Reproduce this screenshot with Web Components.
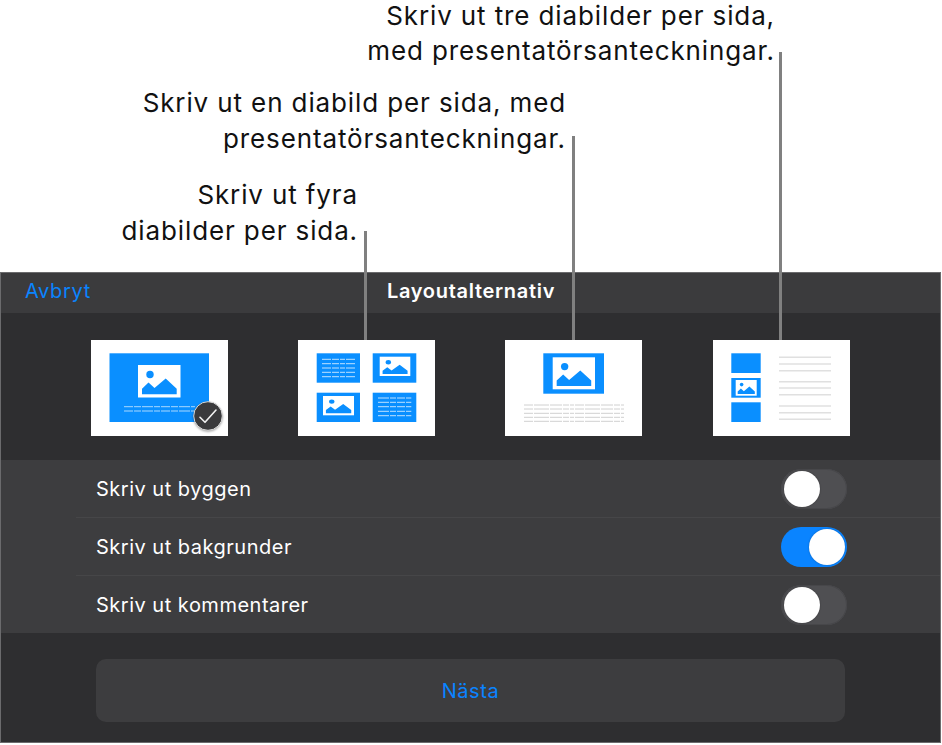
<!doctype html>
<html lang="sv">
<head>
<meta charset="utf-8">
<title>Layoutalternativ</title>
<style>
  html, body { margin: 0; background: #fff; }
  body { font-family: Inter, "Liberation Sans", sans-serif; }
</style>
</head>
<body>
<layout-figure>
  <callout-note slot="notes" right="167" top="1" line-x="780" line-top="52"><span style="margin-bottom: 5px">Skriv ut tre diabilder per sida,</span><span>med presentatörsanteckningar.</span></callout-note>
  <callout-note slot="notes" right="376" top="88" line-x="573" line-top="136"><span>Skriv ut en diabild per sida, med</span><span>presentatörsanteckningar.</span></callout-note>
  <callout-note slot="notes" right="584" top="180" line-x="365" line-top="231"><span>Skriv ut fyra</span><span>diabilder per sida.</span></callout-note>
  <layout-panel>
    <print-thumb kind="one" checked></print-thumb>
    <print-thumb kind="four"></print-thumb>
    <print-thumb kind="notes"></print-thumb>
    <print-thumb kind="three"></print-thumb>
    <option-row slot="options" label="Skriv ut byggen"></option-row>
    <option-row slot="options" label="Skriv ut bakgrunder" on></option-row>
    <option-row slot="options" label="Skriv ut kommentarer"></option-row>
  </layout-panel>
</layout-figure>

<script>
const BLUE = "#0a8fff";

// mountain picture, drawn in a 42.5 x 32 frame
function picture(x, y, w, h) {
  const sx = w / 42.5;
  const sy = h / 32;
  return `<g transform="translate(${x} ${y}) scale(${sx} ${sy})">
    <rect width="42.5" height="32" fill="#fff"/>
    <circle cx="12" cy="9.3" r="3.7" fill="${BLUE}"/>
    <path d="M4 28.7V23.3L10.5 17.3L16.5 22.7L27.7 13.3L38.7 23.3V28.7Z" fill="${BLUE}"/>
  </g>`;
}

function textLines(x, w, ys, color, h, dash) {
  return ys
    .map((y) => `<line x1="${x}" x2="${x + w}" y1="${y}" y2="${y}" stroke="${color}" stroke-width="${h}" ${dash ? `stroke-dasharray="${dash}"` : ""}/>`)
    .join("");
}

const THUMBS = {
  one: `<rect x="18.5" y="13.3" width="99.5" height="68.7" fill="${BLUE}"/>
    ${picture(47, 25, 42.5, 32.5)}
    ${textLines(33, 71, [66.7, 71], "#a9d8ff", 1, "9 1 7 1 11 1 6 1")}`,
  four: `<rect x="18.7" y="13.3" width="43.3" height="29.4" fill="${BLUE}"/>
    <rect x="74.7" y="13.3" width="43.6" height="29.4" fill="${BLUE}"/>
    <rect x="18.7" y="52.7" width="43.3" height="29.3" fill="${BLUE}"/>
    <rect x="74.7" y="52.7" width="43.6" height="29.3" fill="${BLUE}"/>
    ${textLines(24, 33.3, [19.3, 23.7, 28, 32.3, 36.7], "#bfe1ff", 1, "9 1 7 1 5 1")}
    ${picture(81.7, 16.7, 30.6, 19.3)}
    ${picture(25, 56, 31, 19.3)}
    ${textLines(80, 33.3, [58, 62.3, 66.7, 71.3, 75.7], "#bfe1ff", 1, "11 1 6 1 8 1")}`,
  notes: `<rect x="38.3" y="13.3" width="60.7" height="40.4" fill="${BLUE}"/>
    ${picture(47.7, 17.3, 42.3, 32)}
    ${textLines(19, 100, [65, 69, 73.3, 77.3, 81.3], "#d0d0d0", 1, "9 1 15 1 12 1 6 1 4 1")}`,
  three: `<rect x="18.3" y="13.3" width="29.4" height="19.7" fill="${BLUE}"/>
    <rect x="18.3" y="38" width="29.4" height="19.7" fill="${BLUE}"/>
    <rect x="18.3" y="62.3" width="29.4" height="19.7" fill="${BLUE}"/>
    ${picture(22.7, 40, 21, 15.7)}
    ${textLines(66, 52, [17.3, 24, 30.7, 41.7, 48, 54.7, 66, 72.7, 79.3], "#e0e0e0", 1.4)}`,
};

class CalloutNote extends HTMLElement {
  constructor() {
    super();
    this.attachShadow({ mode: "open" }).innerHTML = `
      <style>
        :host { display: contents; }
        .text {
          position: absolute;
          white-space: nowrap;
          text-align: right;
          color: #111;
          font: 400 26px/30px Inter, "Liberation Sans", sans-serif;
          letter-spacing: 0.88px;
        }
        ::slotted(span) { display: block; margin-bottom: 6px; }
        .line {
          position: absolute;
          bottom: 0;
          width: 3px;
          margin-left: -1.5px;
          background: #808080;
          z-index: 2;
        }
      </style>
      <div class="text"><slot></slot></div>
      <div class="line"></div>
    `;
  }

  connectedCallback() {
    const text = this.shadowRoot.querySelector(".text");
    const line = this.shadowRoot.querySelector(".line");
    text.style.right = this.getAttribute("right") + "px";
    text.style.top = this.getAttribute("top") + "px";
    line.style.left = this.getAttribute("line-x") + "px";
    line.style.top = this.getAttribute("line-top") + "px";
  }
}

class LayoutFigure extends HTMLElement {
  constructor() {
    super();
    this.attachShadow({ mode: "open" }).innerHTML = `
      <style>
        :host {
          display: block;
          position: relative;
          width: 942px;
          height: 745px;
          overflow: hidden;
          background: #fff;
        }
        .notes {
          position: absolute;
          left: 0;
          top: 0;
          width: 942px;
          height: 340px;
          z-index: 2;
          pointer-events: none;
        }
        .panel { padding-top: 272px; }
      </style>
      <div class="notes"><slot name="notes"></slot></div>
      <div class="panel"><slot></slot></div>
    `;
  }
}

class LayoutPanel extends HTMLElement {
  constructor() {
    super();
    this.attachShadow({ mode: "open" }).innerHTML = `
      <style>
        :host {
          display: block;
          width: 941px;
          height: 471px;
          box-sizing: border-box;
          border: 1px solid #6b6b6d;
          background: #2e2e30;
          color: #fff;
          font-family: Inter, "Liberation Sans", sans-serif;
          letter-spacing: 0.5px;
        }
        header {
          position: relative;
          box-sizing: border-box;
          height: 40px;
          padding-bottom: 4px;
          background: #3b3b3d;
          display: flex;
          align-items: center;
          justify-content: center;
          font-size: 20px;
        }
        .cancel { position: absolute; left: 24px; color: #0a84ff; letter-spacing: 0.65px; }
        h1 { margin: 0 0 0 1px; font: inherit; font-weight: 600; letter-spacing: 0.7px; }
        .thumbs {
          display: flex;
          gap: 70.2px;
          padding: 27px 0 0 90px;
          height: 120px;
        }
        .options {
          background: #3d3d3f;
          height: 173px;
        }
        .foot { padding: 26px 95px 0; }
        button {
          display: block;
          width: 749px;
          height: 63px;
          border: 0;
          padding: 0;
          border-radius: 10px;
          background: #3d3d3f;
          color: #0a84ff;
          font: 400 20px Inter, "Liberation Sans", sans-serif;
          letter-spacing: 0.6px;
        }
      </style>
      <header>
        <span class="cancel">Avbryt</span>
        <h1>Layoutalternativ</h1>
      </header>
      <div class="thumbs"><slot></slot></div>
      <div class="options"><slot name="options"></slot></div>
      <div class="foot"><button type="button">Nästa</button></div>
    `;
  }
}

class PrintThumb extends HTMLElement {
  constructor() {
    super();
    this.attachShadow({ mode: "open" });
  }

  connectedCallback() {
    const kind = this.getAttribute("kind");
    const check = this.hasAttribute("checked")
      ? `<svg class="check" viewBox="0 0 32 32" width="32" height="32">
          <circle cx="16" cy="16" r="14.3" fill="#3a3a3c" stroke="#d8d8d8" stroke-width="1"/>
          <path d="M8 17.3l5 5 11-12.3" fill="none" stroke="#f2f2f2" stroke-width="1.6" stroke-linecap="round" stroke-linejoin="round"/>
        </svg>`
      : "";
    this.shadowRoot.innerHTML = `
      <style>
        :host {
          display: block;
          position: relative;
          width: 137px;
          height: 96px;
          background: #fff;
        }
        svg { display: block; }
        .check {
          position: absolute;
          left: 101px;
          top: 60px;
          filter: drop-shadow(0 1px 1px rgba(0, 0, 0, 0.35));
        }
      </style>
      <svg viewBox="0 0 137 96" width="137" height="96">${THUMBS[kind]}</svg>
      ${check}
    `;
  }
}

class LayoutToggle extends HTMLElement {
  constructor() {
    super();
    this.attachShadow({ mode: "open" }).innerHTML = `
      <style>
        :host {
          display: block;
          position: relative;
          width: 66px;
          height: 40px;
          border-radius: 20px;
          background: #4f4f52;
          box-shadow: inset 0 0 0 1px #47474a;
        }
        :host([on]) { background: #0a84ff; box-shadow: none; }
        .knob {
          position: absolute;
          left: 2.5px;
          top: 2px;
          width: 36px;
          height: 36px;
          border-radius: 50%;
          background: #fff;
          box-shadow: 0 0 2px rgba(0, 0, 0, 0.3);
        }
        :host([on]) .knob { left: 28px; }
      </style>
      <div class="knob"></div>
    `;
  }
}

class OptionRow extends HTMLElement {
  constructor() {
    super();
    this.attachShadow({ mode: "open" }).innerHTML = `
      <style>
        :host { display: block; padding-left: 75px; }
        .row {
          display: flex;
          align-items: center;
          justify-content: space-between;
          box-sizing: border-box;
          height: 58px;
          padding: 0 93px 0 20px;
          border-bottom: 1px solid #464648;
          color: #fff;
          font-size: 20px;
          letter-spacing: 0.5px;
        }
        :host(:last-child) .row { border-bottom: 0; height: 57px; }
      </style>
      <div class="row">
        <span class="label"></span>
        <layout-toggle></layout-toggle>
      </div>
    `;
  }

  connectedCallback() {
    this.shadowRoot.querySelector(".label").textContent = this.getAttribute("label");
    if (this.hasAttribute("on")) {
      this.shadowRoot.querySelector("layout-toggle").setAttribute("on", "");
    }
  }
}

customElements.define("callout-note", CalloutNote);
customElements.define("layout-figure", LayoutFigure);
customElements.define("layout-panel", LayoutPanel);
customElements.define("print-thumb", PrintThumb);
customElements.define("layout-toggle", LayoutToggle);
customElements.define("option-row", OptionRow);
</script>
</body>
</html>
